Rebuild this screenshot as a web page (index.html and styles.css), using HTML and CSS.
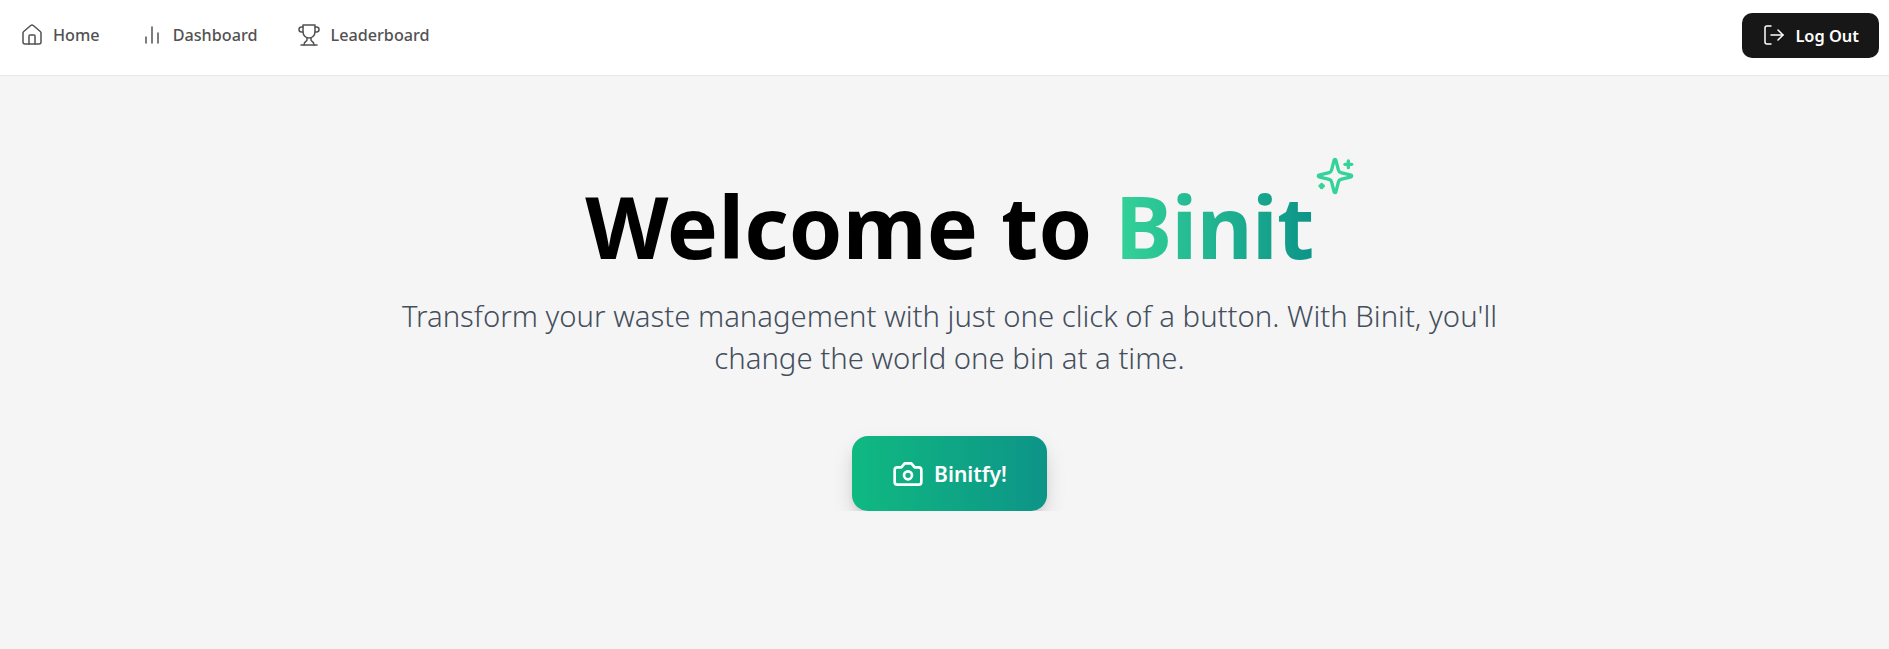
FILE: index.html
```html
<!DOCTYPE html>
<html lang="en">
<head>
    <meta charset="UTF-8">
    <title>Binit</title>
    <link rel="stylesheet" href="styles.css">
</head>
<body>

    <header class="header">
        <nav class="nav">
            <a class="nav-link" href="#">
                <svg class="icon" viewBox="0 0 24 24"><path d="M15 21v-8a1 1 0 0 0-1-1h-4a1 1 0 0 0-1 1v8"/><path d="M3 10a2 2 0 0 1 .709-1.528l7-5.999a2 2 0 0 1 2.582 0l7 5.999A2 2 0 0 1 21 10v9a2 2 0 0 1-2 2H5a2 2 0 0 1-2-2z"/></svg>
                Home
            </a>
            <a class="nav-link" href="#">
                <svg class="icon" viewBox="0 0 24 24"><line x1="12" x2="12" y1="20" y2="4"/><line x1="18" x2="18" y1="20" y2="10"/><line x1="6" x2="6" y1="20" y2="14"/></svg>
                Dashboard
            </a>
            <a class="nav-link" href="#">
                <svg class="icon" viewBox="0 0 24 24"><path d="M6 9H4.500a2.500 2.500 0 0 1 0-5H6"/><path d="M18 9h1.500a2.500 2.500 0 0 0 0-5H18"/><path d="M4 22h16"/><path d="M10 14.660V17c0 .550-.470.980-.970 1.210C7.850 18.750 7 20.240 7 22"/><path d="M14 14.660V17c0 .550.470.980.970 1.210C16.150 18.750 17 20.240 17 22"/><path d="M18 2H6v7a6 6 0 0 0 12 0V2Z"/></svg>
                Leaderboard
            </a>
        </nav>
        <button class="logout">
            <svg class="icon" viewBox="0 0 24 24"><path d="M9 21H5a2 2 0 0 1-2-2V5a2 2 0 0 1 2-2h4"/><polyline points="16 17 21 12 16 7"/><line x1="21" x2="9" y1="12" y2="12"/></svg>
            Log Out
        </button>
    </header>

    <main class="hero">
        <h1 class="title">Welcome to <span class="brand">Binit<svg class="sparkle" viewBox="0 0 24 24"><path d="M9.937 15.500A2 2 0 0 0 8.500 14.063l-6.135-1.582a.500.500 0 0 1 0-.962L8.500 9.936A2 2 0 0 0 9.937 8.500l1.582-6.135a.500.500 0 0 1 .963 0L14.063 8.500A2 2 0 0 0 15.500 9.937l6.135 1.581a.500.500 0 0 1 0 .964L15.500 14.063a2 2 0 0 0-1.437 1.437l-1.582 6.135a.500.500 0 0 1-.963 0z"/><path d="M20 3v4"/><path d="M22 5h-4"/><path d="M4 17v2"/><path d="M5 18H3"/></svg></span></h1>
        <p class="tagline">Transform your waste management with just one click of a button. With Binit, you'll change the world one bin at a time.</p>
        <button class="cta">
            <svg class="cta-icon" viewBox="0 0 24 24"><path d="M14.500 4h-5L7 7H4a2 2 0 0 0-2 2v9a2 2 0 0 0 2 2h16a2 2 0 0 0 2-2V9a2 2 0 0 0-2-2h-3l-2.500-3z"/><circle cx="12" cy="13" r="3"/></svg>
            Binitfy!
        </button>
    </main>

</body>
</html>
```

FILE: styles.css
```css
body {
    font-family: 'Noto Sans', 'Open Sans', sans-serif;
    background-color: #f5f5f5;
    margin: 0;
    padding: 0;
}

.header {
    display: flex;
    justify-content: space-between;
    align-items: center;
    height: 76px;
    box-sizing: border-box;
    padding: 0 10px 5px 20px;
    background-color: #fff;
    border-bottom: 1px solid #e8e8e8;
}

.nav {
    display: flex;
    align-items: center;
    gap: 40px;
}

.nav-link {
    display: flex;
    align-items: center;
    gap: 9px;
    font-size: 16.2px;
    font-weight: 500;
    color: #525252;
    text-decoration: none;
}

.icon {
    width: 24px;
    height: 24px;
    fill: none;
    stroke: currentColor;
    stroke-width: 1.5;
    stroke-linecap: round;
    stroke-linejoin: round;
}

.logout {
    display: flex;
    align-items: center;
    gap: 9px;
    height: 45px;
    padding: 0 20px;
    background-color: #171717;
    color: #fff;
    border: none;
    border-radius: 10px;
    font-family: inherit;
    font-size: 16.4px;
    font-weight: 600;
}

.hero {
    display: flex;
    flex-direction: column;
    align-items: center;
    padding: 107px 0 0 10px;
}

.title {
    margin: 0;
    font-size: 86px;
    line-height: 1;
    font-weight: 700;
    letter-spacing: 0.2px;
    color: #000;
}

.brand {
    position: relative;
    letter-spacing: -0.6px;
    background-image: linear-gradient(to right, #34d399, #0d9488);
    -webkit-background-clip: text;
    background-clip: text;
    color: transparent;
}

.sparkle {
    position: absolute;
    top: -11px;
    right: -41px;
    width: 40px;
    height: 40px;
    fill: none;
    stroke: #34d399;
    stroke-width: 2;
    stroke-linecap: round;
    stroke-linejoin: round;
}

.tagline {
    width: 1152px;
    margin: 26px 0 0;
    font-size: 29.3px;
    line-height: 42px;
    font-weight: 300;
    text-align: center;
    color: #444e5c;
}

.cta {
    display: flex;
    align-items: center;
    gap: 10px;
    height: 75px;
    margin-top: 57px;
    padding: 0 40px;
    background-image: linear-gradient(to right, #10b981, #0d9488);
    color: #fff;
    border: none;
    border-radius: 16px;
    box-shadow: 0 10px 22px -3px rgba(0, 0, 0, 0.18), 0 4px 8px -4px rgba(0, 0, 0, 0.14);
    font-family: inherit;
    font-size: 21px;
    font-weight: 600;
}

.cta-icon {
    width: 32px;
    height: 32px;
    fill: none;
    stroke: #fff;
    stroke-width: 2;
    stroke-linecap: round;
    stroke-linejoin: round;
}
```
